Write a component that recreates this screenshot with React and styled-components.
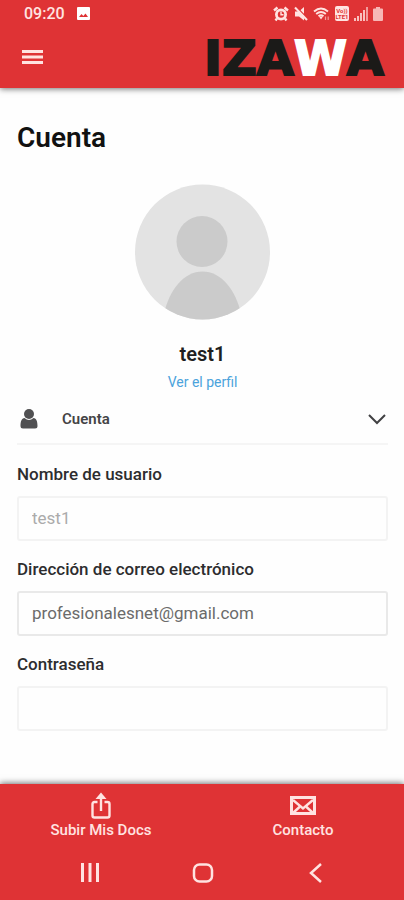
import React, { useState } from 'react';
import styled, { createGlobalStyle } from 'styled-components';

const red = '#df3335';
const pale = '#ffe3e1';

const GlobalStyle = createGlobalStyle`
    * {
        box-sizing: border-box;
    }
    body {
        margin: 0;
        background: #fefefe;
        color: #2d2d2f;
        font-family: Roboto, 'Liberation Sans', sans-serif;
        font-size: 17px;
        line-height: 24px;
    }
`;

const Page = styled.div`
    display: flex;
    flex-direction: column;
    min-height: 100vh;
`;

const Header = styled.header`
    background: ${red};
    box-shadow: 0 1px 6px rgba(0, 0, 0, 0.55);
`;

const StatusBar = styled.div`
    display: flex;
    align-items: center;
    justify-content: space-between;
    height: 27px;
    padding: 0 21px 0 24px;
    color: ${pale};
`;

const StatusGroup = styled.div`
    display: flex;
    align-items: center;
    gap: ${props => props.$gap}px;
`;

const Clock = styled.time`
    font-size: 16px;
    font-weight: 500;
`;

const TopBar = styled.div`
    display: flex;
    align-items: center;
    justify-content: space-between;
    height: 61px;
    padding: 0 20px 0 22px;
`;

const IconButton = styled.button`
    display: flex;
    padding: 0;
    border: 0;
    background: none;
    color: ${pale};
    cursor: pointer;
`;

const Logo = styled.a`
    color: #1b1a18;
    font-family: 'DejaVu Sans', Verdana, sans-serif;
    font-size: 48px;
    font-weight: 700;
    font-kerning: none;
    line-height: 60px;
    text-decoration: none;
    -webkit-text-stroke: 2px;

    span {
        color: #fff;
    }
`;

const Main = styled.main`
    flex: 1;
    padding: 32px 16px 48px 17px;
`;

const Title = styled.h1`
    margin: 0;
    color: #111;
    font-size: 28px;
    font-weight: 600;
    line-height: 36px;
`;

const Profile = styled.section`
    display: flex;
    flex-direction: column;
    align-items: center;
    padding-top: 28px;
`;

const ProfileName = styled.h2`
    margin: 20px 0 4px;
    color: #1f1f21;
    font-size: 20px;
    font-weight: 600;
    line-height: 28px;
`;

const ProfileLink = styled.a`
    color: #4ba3dc;
    font-size: 14px;
    line-height: 20px;
    text-decoration: none;
`;

const SectionToggle = styled.button`
    display: flex;
    align-items: center;
    width: 100%;
    height: 53px;
    padding: 3px 2px 0 3px;
    border: 0;
    border-bottom: 2px solid #f5f5f5;
    background: none;
    color: #444446;
    font: inherit;
    font-size: 15px;
    font-weight: 600;
    text-align: left;
    cursor: pointer;

    span {
        flex: 1;
        margin-left: 24px;
    }
`;

const Form = styled.form`
    display: flex;
    flex-direction: column;
    gap: 16px;
    padding-top: 17px;
`;

const Field = styled.div`
    display: flex;
    flex-direction: column;
    gap: 10px;
`;

const Label = styled.label`
    font-weight: 500;
`;

const Input = styled.input`
    width: 100%;
    height: 45px;
    padding: 0 13px 2px;
    border: 2px solid ${props => (props.$strong ? '#e9e9e9' : '#f3f3f3')};
    border-radius: 3px;
    outline: none;
    background: #fefefe;
    color: #6b6b6b;
    font: inherit;

    &:disabled {
        color: #ababab;
    }
`;

const Footer = styled.footer`
    position: sticky;
    bottom: 0;
    background: ${red};
    box-shadow: 0 -1px 6px rgba(0, 0, 0, 0.55);
`;

const Tabs = styled.nav`
    display: grid;
    grid-template-columns: 1fr 1fr;
    height: 62px;
`;

const Tab = styled.a`
    display: flex;
    flex-direction: column;
    align-items: center;
    padding-top: 8px;
    color: ${pale};
    font-size: 15px;
    font-weight: 500;
    line-height: 20px;
    text-decoration: none;

    svg {
        height: 28px;
    }
`;

const SystemNav = styled.div`
    display: flex;
    align-items: center;
    justify-content: space-between;
    height: 54px;
    padding: 0 78px 0 80px;
`;

const PhotoIcon = () => (
    <svg width="13" height="13" viewBox="0 0 13 13" aria-hidden="true">
        <rect width="13" height="13" rx="1" fill="#fff" />
        <path d="M2 10 4.5 7l1.8 2L8.5 6.5 11 10z" fill={red} />
    </svg>
);

const AlarmIcon = () => (
    <svg width="16" height="16" viewBox="0 0 16 16" aria-hidden="true">
        <g stroke="currentColor" strokeWidth="2.4">
            <path d="M1 4.5 4.5 1.5M15 4.5 11.5 1.5M4 12.5 2.5 14.5M12 12.5 13.5 14.5" />
        </g>
        <circle cx="8" cy="8.5" r="6" fill="currentColor" />
        <circle cx="8" cy="8.5" r="3.2" fill={red} />
        <path d="M8 5.5v3.2h2.5" fill="none" stroke="currentColor" strokeWidth="1.4" />
    </svg>
);

const MuteIcon = () => (
    <svg width="14" height="16" viewBox="0 0 14 16" aria-hidden="true">
        <path d="M1 5.5h4L10 1v13.5L5 10.5H1z" fill="currentColor" />
        <path d="M2.5 1l11 11.5" stroke={red} strokeWidth="1.5" />
        <path d="M1 1.5l12 12.5" stroke="currentColor" strokeWidth="2" />
    </svg>
);

const WifiIcon = () => (
    <svg width="17" height="16" viewBox="0 0 17 16" fill="none" stroke="currentColor" aria-hidden="true">
        <path d="M1 5.5Q8 -.5 15 5.5M3.2 8Q8 4 12.8 8M5.5 10.3Q8 8.3 10.5 10.3" strokeWidth="1.9" />
        <path d="M6 10.5h4l-2 3z" fill="currentColor" stroke="none" />
        <path d="M12.5 10.5v3.5M15.2 10.5v3.5" strokeWidth="1.2" opacity=".6" />
    </svg>
);

const VolteIcon = () => (
    <svg width="14" height="15" viewBox="0 0 14 15" aria-hidden="true">
        <rect width="14" height="15" rx="2" fill="currentColor" />
        <g fill={red} fontFamily="Roboto" fontWeight="700" fontSize="6" textAnchor="middle">
            <text x="7" y="7">
                Vo))
            </text>
            <text x="7" y="13">
                LTE1
            </text>
        </g>
    </svg>
);

const SignalIcon = () => (
    <svg width="14" height="14" viewBox="0 0 14 14" fill="currentColor" aria-hidden="true">
        <path d="M0 11h2v3H0zM3 9h2v5H3zM6 6h2v8H6zM9 3h2v11H9z" opacity=".8" />
        <path d="M12 0h2v14h-2z" opacity=".6" />
    </svg>
);

const BatteryIcon = () => (
    <svg width="10" height="14" viewBox="0 0 10 14" fill="currentColor" opacity=".75" aria-hidden="true">
        <path d="M3 0h4v1.5h2q1 0 1 1V13q0 1-1 1H1q-1 0-1-1V2.5q0-1 1-1h2z" />
    </svg>
);

const MenuIcon = () => (
    <svg width="21" height="15" viewBox="0 0 21 15" fill="currentColor" aria-hidden="true">
        <path d="M0 0h21v3H0zM0 5.5h21v3H0zM0 11h21v3H0z" />
    </svg>
);

const Avatar = () => (
    <svg width="135" height="136" viewBox="0 0 135 136" role="img" aria-label="test1">
        <clipPath id="avatar">
            <circle cx="67.5" cy="68" r="67.5" />
        </clipPath>
        <g clipPath="url(#avatar)">
            <rect width="135" height="136" fill="#e3e3e3" />
            <circle cx="67" cy="57.5" r="25.5" fill="#cbcbcb" />
            <path d="M29 130C34 106 49 87.5 67.5 87.5S101 106 106 130v8H29z" fill="#cbcbcb" />
        </g>
    </svg>
);

const PersonIcon = () => (
    <svg width="18" height="22" viewBox="0 0 18 22" aria-hidden="true">
        <path
            d="M4.5 10C1.5 10.5.5 13.5.5 18q0 2.500 2.500 2.500h12q2.500 0 2.500-2.500c0-4.500-1-7.500-4-8Q9 14 4.500 10z"
            fill="#505052"
        />
        <circle cx="9" cy="6" r="5" fill="#505052" />
    </svg>
);

const ChevronIcon = () => (
    <svg width="18" height="12" viewBox="0 0 18 12" fill="none" stroke="#414143" strokeWidth="2" aria-hidden="true">
        <path d="M1 2l8 8 8-8" />
    </svg>
);

const UploadIcon = () => (
    <svg width="20" height="28" viewBox="0 0 20 28" fill="none" stroke="currentColor" strokeWidth="2.4" aria-hidden="true">
        <path d="M6.5 10H3.5Q1.500 10 1.500 12v11.500q0 2 2 2h13q2 0 2-2V12q0-2-2-2h-3" />
        <path d="M10 19V4" />
        <path d="M4.500 7 10 .5 15.500 7z" fill="currentColor" stroke="none" />
    </svg>
);

const MailIcon = () => (
    <svg width="26" height="28" viewBox="0 0 26 28" fill="none" stroke="currentColor" strokeWidth="2.4" aria-hidden="true">
        <rect x="1.500" y="5.500" width="23" height="16" strokeWidth="3" />
        <path d="M3 8l10 8.5L23 8M3.500 20.500l6-5.500M22.500 20.500l-6-5.500" />
    </svg>
);

const RecentsIcon = () => (
    <svg width="20" height="20" viewBox="0 0 20 20" fill="currentColor" aria-hidden="true">
        <path d="M1 0h3v19H1zM8.5 0h3v19h-3zM16 0h3v19h-3z" />
    </svg>
);

const HomeIcon = () => (
    <svg width="22" height="20" viewBox="0 0 22 20" fill="none" stroke="currentColor" strokeWidth="2.5" aria-hidden="true">
        <rect x="2" y="1.5" width="18" height="17" rx="5.5" />
    </svg>
);

const BackIcon = () => (
    <svg width="20" height="20" viewBox="0 0 20 20" fill="none" stroke="currentColor" strokeWidth="2.5" aria-hidden="true">
        <path d="M15 1 5 10l10 9" />
    </svg>
);

const App = () => {
    const [open, setOpen] = useState(true);

    return (
        <Page>
            <GlobalStyle />
            <Header>
                <StatusBar>
                    <StatusGroup $gap={12}>
                        <Clock>09:20</Clock>
                        <PhotoIcon />
                    </StatusGroup>
                    <StatusGroup $gap={5}>
                        <AlarmIcon />
                        <MuteIcon />
                        <WifiIcon />
                        <VolteIcon />
                        <SignalIcon />
                        <BatteryIcon />
                    </StatusGroup>
                </StatusBar>
                <TopBar>
                    <IconButton type="button" aria-label="Menú">
                        <MenuIcon />
                    </IconButton>
                    <Logo href="#">
                        IZA<span>W</span>A
                    </Logo>
                </TopBar>
            </Header>
            <Main>
                <Title>Cuenta</Title>
                <Profile>
                    <Avatar />
                    <ProfileName>test1</ProfileName>
                    <ProfileLink href="#perfil">Ver el perfil</ProfileLink>
                </Profile>
                <SectionToggle type="button" aria-expanded={open} onClick={() => setOpen(!open)}>
                    <PersonIcon />
                    <span>Cuenta</span>
                    <ChevronIcon />
                </SectionToggle>
                {open && (
                    <Form>
                        <Field>
                            <Label htmlFor="username">Nombre de usuario</Label>
                            <Input id="username" defaultValue="test1" disabled />
                        </Field>
                        <Field>
                            <Label htmlFor="email">Dirección de correo electrónico</Label>
                            <Input id="email" type="email" defaultValue="profesionalesnet@gmail.com" $strong />
                        </Field>
                        <Field>
                            <Label htmlFor="password">Contraseña</Label>
                            <Input id="password" type="password" />
                        </Field>
                    </Form>
                )}
            </Main>
            <Footer>
                <Tabs>
                    <Tab href="#docs">
                        <UploadIcon />
                        Subir Mis Docs
                    </Tab>
                    <Tab href="#contacto">
                        <MailIcon />
                        Contacto
                    </Tab>
                </Tabs>
                <SystemNav>
                    <IconButton type="button" aria-label="Recientes">
                        <RecentsIcon />
                    </IconButton>
                    <IconButton type="button" aria-label="Inicio">
                        <HomeIcon />
                    </IconButton>
                    <IconButton type="button" aria-label="Atrás">
                        <BackIcon />
                    </IconButton>
                </SystemNav>
            </Footer>
        </Page>
    );
};

export default App;
